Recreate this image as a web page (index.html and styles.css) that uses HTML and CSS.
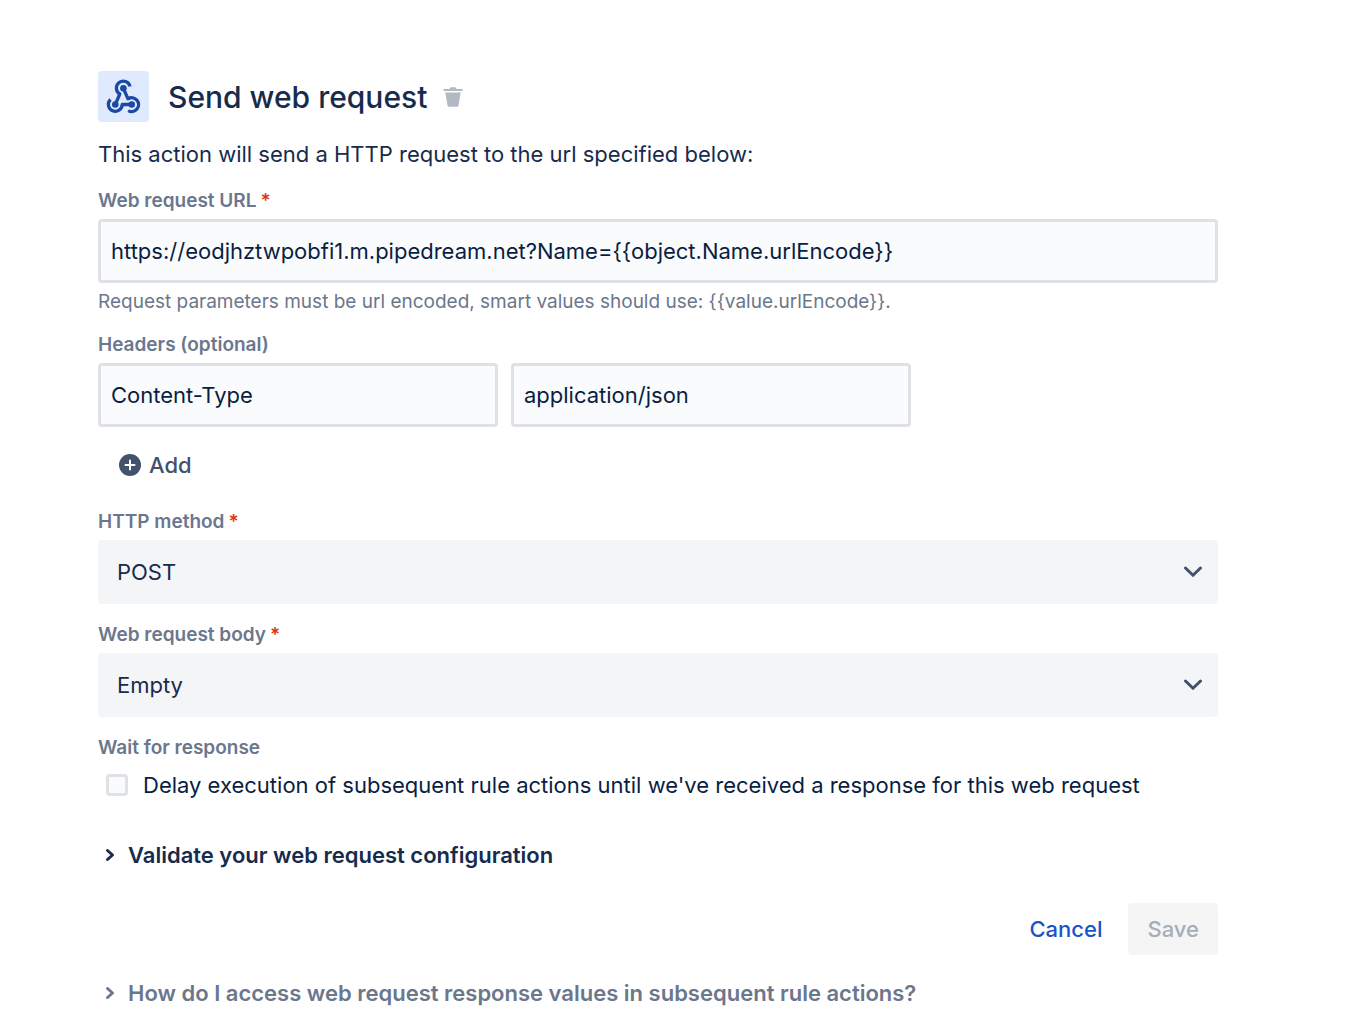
FILE: index.html
```
<!DOCTYPE html>
<html lang="en">
<head>
  <meta charset="UTF-8" />
  <meta name="viewport" content="width=device-width, initial-scale=1.0"/>
  <title>Send web request</title>
  <link rel="stylesheet" href="styles.css">
</head>
<body>

<main class="panel">
  <header class="panel-header">
    <span class="action-icon">
      <svg viewBox="0 0 51 51" width="51" height="51" aria-hidden="true">
        <g fill="none" stroke="#1a49a6" stroke-width="3.3" stroke-linejoin="round">
          <path d="M32 15.500A6.900 6.900 0 1 0 21.800 23L17.300 33.300"/>
          <path d="M25.400 17.300L30 27.800A6.900 6.900 0 1 1 30.200 39.600"/>
          <path d="M12.500 28.500A6.900 6.900 0 1 0 24.200 33.500H33.700"/>
        </g>
        <g fill="#1a49a6">
          <circle cx="25.400" cy="17.300" r="3.300"/>
          <circle cx="17.300" cy="33.500" r="3.300"/>
          <circle cx="33.700" cy="33.500" r="3.300"/>
        </g>
      </svg>
    </span>
    <h1>Send web request</h1>
    <button class="delete" type="button" aria-label="Delete">
      <svg viewBox="0 0 20 20" width="20" height="20" aria-hidden="true">
        <path fill="#b3b9c4" d="M1 2H6.500Q7 .3 8 .3H12Q13 .3 13.500 2H19Q19.500 2 19.500 2.500V4H.500V2.500Q.500 2 1 2ZM2.300 5.500H17.700L15.500 18.500Q15.200 19.700 14 19.700H6Q4.800 19.700 4.500 18.500Z"/>
      </svg>
    </button>
  </header>

  <form>
    <p class="intro">This action will send a HTTP request to the url specified below:</p>

    <!-- URL -->
    <div class="field">
      <label class="label" for="url">Web request URL<span class="required">*</span></label>
      <input class="textfield" id="url" type="text" value="https://eodjhztwpobfi1.m.pipedream.net?Name={{object.Name.urlEncode}}">
      <p class="help">Request parameters must be url encoded, smart values should use: {{value.urlEncode}}.</p>
    </div>

    <!-- Headers -->
    <div class="field">
      <label class="label" for="headerName">Headers (optional)</label>
      <div class="header-row">
        <input class="textfield" id="headerName" type="text" value="Content-Type">
        <input class="textfield" type="text" value="application/json" aria-label="Header value">
      </div>
      <button class="add" type="button">
        <svg viewBox="0 0 22 22" width="22" height="22" aria-hidden="true">
          <circle cx="11" cy="11" r="11" fill="#42526e"/>
          <path d="M11 6.500V15.500M6.500 11H15.500" stroke="#fff" stroke-width="2" stroke-linecap="round"/>
        </svg>
        Add
      </button>
    </div>

    <!-- Method and body -->
    <div class="field">
      <label class="label" for="method">HTTP method<span class="required">*</span></label>
      <div class="select">
        <select id="method">
          <option>GET</option>
          <option selected>POST</option>
          <option>PUT</option>
          <option>DELETE</option>
        </select>
        <svg class="chevron" viewBox="0 0 20 12" width="20" height="12" aria-hidden="true"><path d="M2.500 2L10 9.300L17.500 2"/></svg>
      </div>
    </div>
    <div class="field">
      <label class="label" for="body">Web request body<span class="required">*</span></label>
      <div class="select">
        <select id="body">
          <option selected>Empty</option>
          <option>Custom data</option>
        </select>
        <svg class="chevron" viewBox="0 0 20 12" width="20" height="12" aria-hidden="true"><path d="M2.500 2L10 9.300L17.500 2"/></svg>
      </div>
    </div>

    <!-- Response -->
    <div class="field">
      <div class="label">Wait for response</div>
      <label class="check"><input type="checkbox">Delay execution of subsequent rule actions until we've received a response for this web request</label>
    </div>

    <button class="expander" type="button" aria-expanded="false">
      <svg viewBox="0 0 10 14" width="10" height="14" aria-hidden="true"><path d="M2.500 2.500L7.500 7L2.500 11.500"/></svg>
      Validate your web request configuration
    </button>

    <div class="actions">
      <button class="btn cancel" type="button">Cancel</button>
      <button class="btn save" type="submit" disabled>Save</button>
    </div>

    <button class="expander muted" type="button" aria-expanded="false">
      <svg viewBox="0 0 10 14" width="10" height="14" aria-hidden="true"><path d="M2.500 2.500L7.500 7L2.500 11.500"/></svg>
      How do I access web request response values in subsequent rule actions?
    </button>
  </form>
</main>

</body>
</html>
```
FILE: styles.css
```
* { box-sizing: border-box; }
body {
  margin: 0; background: #fff; color: #172b4d;
  font: 22px/28px Inter, "Liberation Sans", sans-serif;
}
h1, p { margin: 0; }
button, input, select { font: inherit; color: inherit; }
button { border: 0; padding: 0; background: none; cursor: pointer; }
svg { display: block; flex: none; }

.panel { padding: 71px 140px 24px 98px; }
.panel-header { display: flex; align-items: center; }
.action-icon { background: #e0eaff; border-radius: 4px; }
h1 { font-size: 30px; line-height: 40px; font-weight: 500; margin: 0 16px 0 19px; }
.intro { margin: 18px 0 21px; }

.field { margin-top: 19px; }
.label {
  display: block; margin-bottom: 6px;
  color: #6b778c; font-size: 19px; line-height: 24px; font-weight: 600;
}
.required { color: #de350b; margin-left: 4px; }
.help { margin-top: 7px; color: #6b778c; font-size: 19px; line-height: 24px; }

.textfield {
  display: block; width: 100%; height: 64px; padding: 0 10px;
  background: #fafbfc; border: 3px solid #dfe1e6; border-radius: 4px;
  color: #091e42;
}
.header-row { display: flex; gap: 13px; }
.header-row .textfield { width: 400px; }
.add {
  display: flex; align-items: center; gap: 8px;
  height: 52px; margin-top: 12px; padding: 0 21px;
  color: #42526e; font-weight: 500;
}

.select { position: relative; }
.select select {
  display: block; width: 100%; height: 64px; padding: 0 60px 0 19px;
  appearance: none; border: 0; border-radius: 4px; background: #f4f5f7;
}
.chevron {
  position: absolute; right: 15px; top: 26px; pointer-events: none;
  fill: none; stroke: #42526e; stroke-width: 3; stroke-linecap: round; stroke-linejoin: round;
}

.check { display: flex; align-items: center; gap: 15px; margin-top: 11px; padding-left: 8px; color: #091e42; }
.check input {
  appearance: none; width: 22px; height: 22px; margin: 0; flex: none;
  background: #fafbfc; border: 3px solid #dfe1e6; border-radius: 4px;
}

.expander {
  display: flex; align-items: center; gap: 13px;
  margin-top: 42px; padding-left: 7px; font-weight: 600; text-align: left;
}
.expander path { fill: none; stroke: currentColor; stroke-width: 3; stroke-linecap: round; stroke-linejoin: round; }
.muted { margin-top: 24px; color: #6b778c; }

.actions { display: flex; justify-content: flex-end; gap: 7px; margin-top: 34px; }
.btn { height: 52px; padding: 0 19px; border-radius: 4px; font-weight: 500; }
.cancel { color: #1a53c8; }
.save { background: #f5f5f5; color: #a5adba; cursor: default; }
```
